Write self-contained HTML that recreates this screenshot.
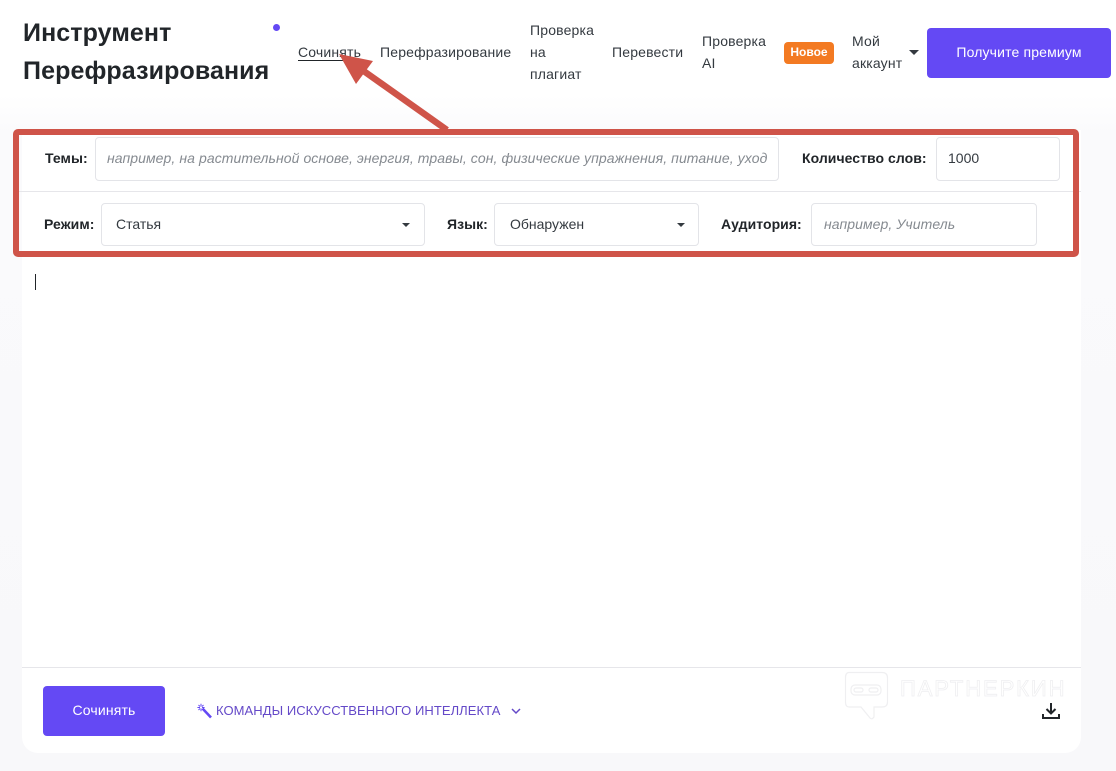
<!DOCTYPE html>
<html lang="ru"><head><meta charset="utf-8"><title>Инструмент Перефразирования</title>
<style>
html,body{margin:0;padding:0}
body{width:1116px;height:771px;position:relative;overflow:hidden;background:#fff;font-family:"Liberation Sans",sans-serif;color:#212529}
.a{position:absolute;white-space:nowrap}
.bg{left:0;top:95px;width:1116px;height:676px;background:linear-gradient(#fff 0,#fafafc 40px,#f8f8fa 100%)}
.card{left:22px;top:130px;width:1059px;height:623px;background:#fff;border-radius:0 0 16px 16px}
.n{font-size:14px;line-height:22px;color:#343a40;letter-spacing:.17px}
.l{font-size:14px;font-weight:bold;line-height:20px;color:#212529;letter-spacing:.05px}
.f{box-sizing:border-box;border:1px solid #e3e4e8;border-radius:4px;background:#fff;font-size:14px;line-height:20px;color:#343a40}
.ph{font-style:italic;color:#858a90;letter-spacing:.08px}
.c{width:0;height:0;border-left:4.5px solid transparent;border-right:4.5px solid transparent;border-top:4.5px solid #343a40}
.btn{background:#6449f4;color:#fff;border-radius:4px;font-size:14px;text-align:center;letter-spacing:.15px}
</style></head><body>
<div class="a bg"></div>
<div class="a card"></div>

<div class="a" style="left:23px;top:14px;font-size:25px;font-weight:bold;line-height:38px;color:#212529;letter-spacing:.1px">Инструмент</div>
<div class="a" style="left:23px;top:52px;font-size:25px;font-weight:bold;line-height:38px;color:#212529;letter-spacing:.1px">Перефразирования</div>
<div class="a" style="left:273px;top:24px;width:7px;height:7px;border-radius:50%;background:#6449f4"></div>

<div class="a n" style="left:298px;top:41px;border-bottom:1px solid #212529;height:19px">Сочинять</div>
<div class="a n" style="left:380px;top:41px">Перефразирование</div>
<div class="a n" style="left:530px;top:19px">Проверка</div>
<div class="a n" style="left:530px;top:41px">на</div>
<div class="a n" style="left:530px;top:63px">плагиат</div>
<div class="a n" style="left:612px;top:41px">Перевести</div>
<div class="a n" style="left:702px;top:30px">Проверка</div>
<div class="a n" style="left:702px;top:52px">AI</div>
<div class="a" style="left:784px;top:42px;width:50px;height:22px;background:#f37a22;border-radius:4px;color:#fff;font-size:12px;font-weight:bold;line-height:20px;text-align:center">Новое</div>
<div class="a n" style="left:852px;top:30px">Мой</div>
<div class="a n" style="left:852px;top:52px">аккаунт</div>
<div class="a c" style="left:909px;top:50px;border-left-width:5px;border-right-width:5px;border-top-width:5px"></div>
<div class="a btn" style="left:927px;top:28px;width:184px;height:50px;line-height:49px">Получите премиум</div>

<div class="a l" style="left:45px;top:148px">Темы:</div>
<div class="a f ph" style="left:95px;top:137px;width:684px;height:44px;padding:10px 11px;overflow:hidden">например, на растительной основе, энергия, травы, сон, физические упражнения, питание, уход</div>
<div class="a l" style="left:802px;top:148px">Количество слов:</div>
<div class="a f" style="left:936px;top:137px;width:124px;height:44px;padding:10px 11px">1000</div>
<div class="a" style="left:19px;top:191px;width:1062px;height:1px;background:#e6e6ea"></div>

<div class="a l" style="left:44px;top:214px">Режим:</div>
<div class="a f" style="left:101px;top:203px;width:324px;height:43px;padding:10px 14px">Статья</div>
<div class="a c" style="left:402px;top:223px"></div>
<div class="a l" style="left:447px;top:214px">Язык:</div>
<div class="a f" style="left:494px;top:203px;width:205px;height:43px;padding:10px 15px">Обнаружен</div>
<div class="a c" style="left:677px;top:223px"></div>
<div class="a l" style="left:721px;top:214px">Аудитория:</div>
<div class="a f ph" style="left:811px;top:203px;width:226px;height:43px;padding:10px 12px">например, Учитель</div>

<svg class="a" style="left:0;top:0" width="1116" height="300" viewBox="0 0 1116 300">
<rect x="16" y="132" width="1060" height="122" rx="2" fill="none" stroke="#cf5449" stroke-width="6"/>
<line x1="447" y1="130" x2="358" y2="67" stroke="#cf5449" stroke-width="6.500"/>
<polygon points="339,54 373,61 356,84" fill="#cf5449"/>
</svg>

<div class="a" style="left:35px;top:274px;width:1px;height:16px;background:#212529"></div>

<div class="a" style="left:22px;top:667px;width:1059px;height:1px;background:#e6e6ea"></div>
<div class="a btn" style="left:43px;top:686px;width:122px;height:50px;line-height:48px">Сочинять</div>

<svg class="a" style="left:197px;top:703px" width="16" height="16" viewBox="0 0 16 16" fill="none" stroke="#6449f4" stroke-width="1.200">
<path d="M5.500 5.500 14 14.500" stroke-width="2.600"/>
<path d="M4 .8V3.600M4 5.400V8.200M.4 4.500H3M5 4.500H7.600M1.500 2 3 3.500M6.500 2 5 3.500M1.500 7 3 5.500" stroke-width="1"/>
</svg>
<div class="a" style="left:216px;top:701px;font-size:13px;line-height:20px;color:#6449c8;letter-spacing:.06px">КОМАНДЫ ИСКУССТВЕННОГО ИНТЕЛЛЕКТА</div>
<svg class="a" style="left:511px;top:707px" width="10" height="8" viewBox="0 0 10 8" fill="none" stroke="#6449c8" stroke-width="1.500"><path d="M1 2 5 6 9 2"/></svg>

<svg class="a" style="left:844px;top:671px" width="46" height="50" viewBox="0 0 46 50" fill="none" stroke="#efeff1" stroke-width="1.200">
<path d="M5 1.500H38Q43.500 1.500 43.500 7V31Q43.500 36 38 36H30V46Q28 49 26 47L17 36H5Q1.500 36 1.500 31V7Q1.500 1.500 5 1.500Z"/>
<rect x="7" y="14" width="30" height="10" rx="4"/><rect x="10" y="17" width="9" height="4" rx="2"/><rect x="25" y="17" width="9" height="4" rx="2"/>
</svg>
<div class="a" style="left:900px;top:676px;font-size:22px;font-weight:normal;line-height:26px;color:#fff;letter-spacing:1.900px;-webkit-text-stroke:.8px #efeff1">ПАРТНЕРКИН</div>

<svg class="a" style="left:1042px;top:702px" width="18" height="18" viewBox="0 0 18 18" fill="none" stroke="#212529" stroke-width="2">
<path d="M9 1V11M4.500 7 9 11.500 13.500 7"/><path d="M1 12V16H17V12"/>
</svg>
</body></html>
